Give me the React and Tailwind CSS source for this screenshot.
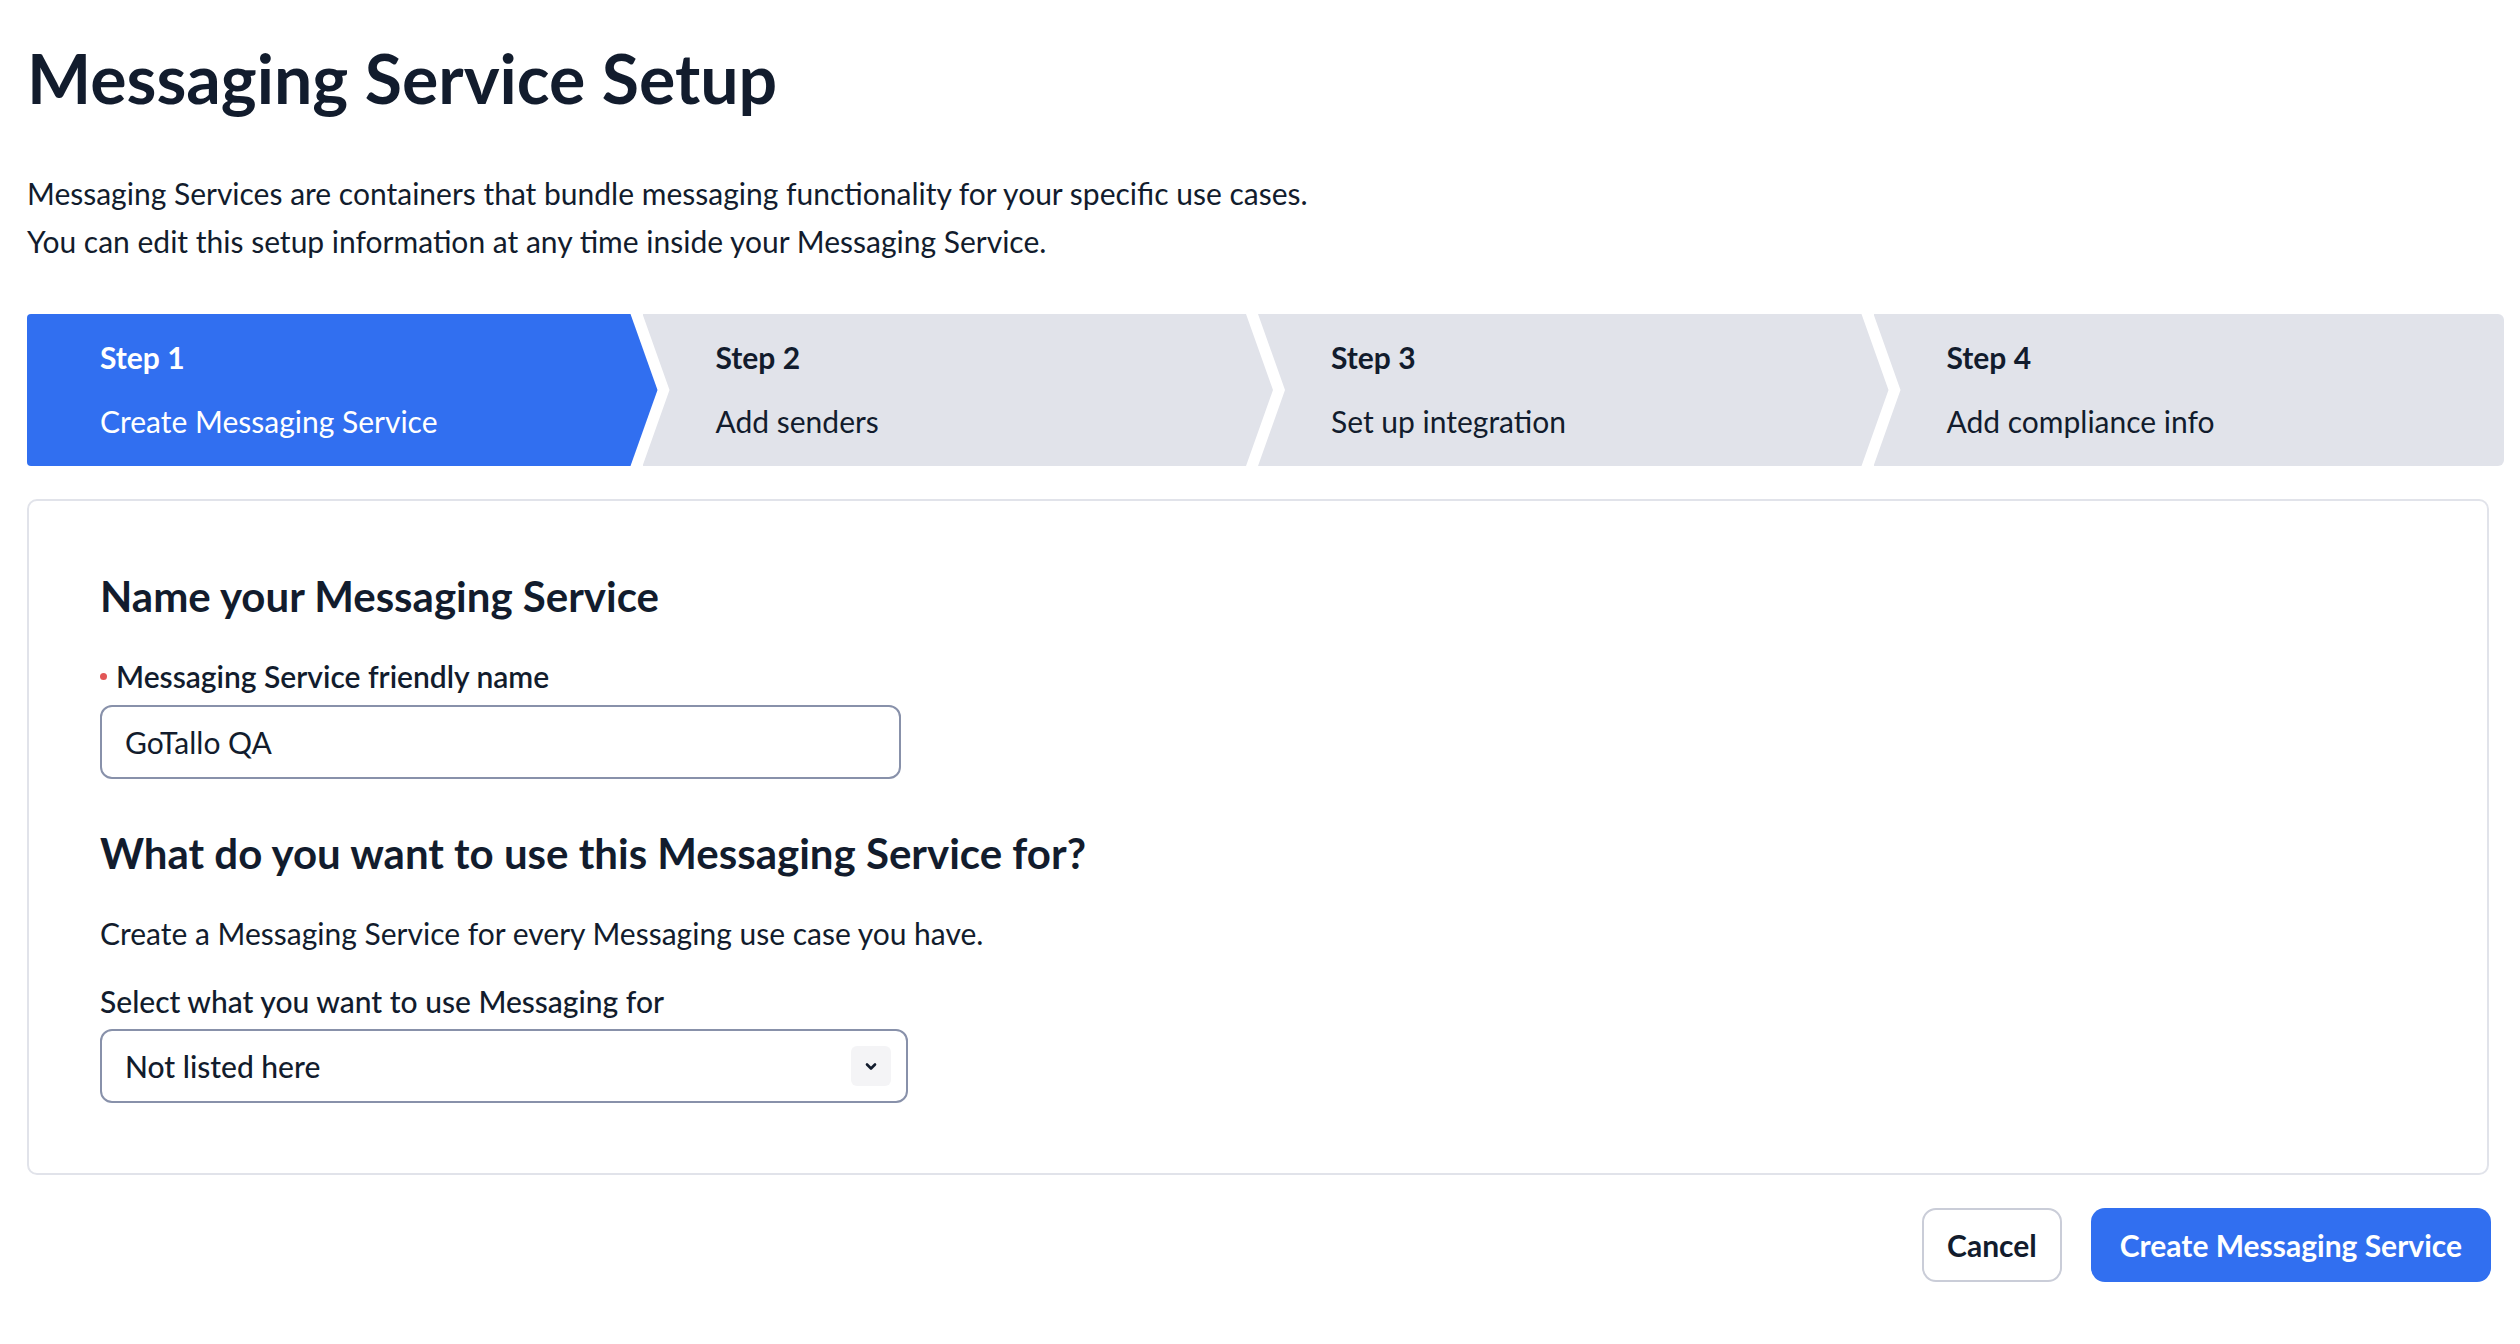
import React from 'react';

const steps = [
  { n: 1, label: 'Create Messaging Service' },
  { n: 2, label: 'Add senders' },
  { n: 3, label: 'Set up integration' },
  { n: 4, label: 'Add compliance info' },
];

// chevron shapes for the step bar
const stepShape = [
  'rounded-l-[4px] bg-[#316FF0] text-white [clip-path:polygon(0_0,calc(100%_-_27px)_0,100%_50%,calc(100%_-_27px)_100%,0_100%)]',
  '-ml-[15px] bg-[#E1E3EA] text-[#121C2D] [clip-path:polygon(0_0,calc(100%_-_27px)_0,100%_50%,calc(100%_-_27px)_100%,0_100%,27px_50%)]',
  '-ml-[15px] bg-[#E1E3EA] text-[#121C2D] [clip-path:polygon(0_0,calc(100%_-_27px)_0,100%_50%,calc(100%_-_27px)_100%,0_100%,27px_50%)]',
  '-ml-[15px] rounded-r-[6px] bg-[#E1E3EA] text-[#121C2D] [clip-path:polygon(0_0,100%_0,100%_100%,0_100%,27px_50%)]',
];

const ChevronDown = () => (
  <svg width="20" height="20" viewBox="0 0 20 20" fill="none">
    <path d="M6 8.5L10 12.5L14 8.5" stroke="#121C2D" strokeWidth="2.6" strokeLinecap="round" strokeLinejoin="round" />
  </svg>
);

const App = () => {
  return (
    <div className="min-h-screen bg-white font-[Lato,sans-serif] text-[#121C2D] pl-[27px] pr-[16px] pt-[42px]">
      {/* 页面标题 */}
      <h1 className="text-[68px] leading-[72px] font-bold">Messaging Service Setup</h1>
      <div className="mt-[55px] text-[30px] leading-[48px]">
        <p>Messaging Services are containers that bundle messaging functionality for your specific use cases.</p>
        <p>You can edit this setup information at any time inside your Messaging Service.</p>
      </div>

      {/* 步骤条 */}
      <div className="mt-[49px] flex h-[152px]">
        {steps.map((s, i) => (
          <div key={s.n} className={`flex-1 pl-[73px] pt-[23px] ${stepShape[i]}`}>
            <div className="text-[30px] leading-[40px] font-bold">Step {s.n}</div>
            <div className="mt-[24px] text-[30px] leading-[40px]">{s.label}</div>
          </div>
        ))}
      </div>

      {/* 表单卡片 */}
      <div className="mt-[33px] mr-[15px] rounded-[10px] border-2 border-[#E1E3EA] pl-[71px] pt-[71px] pb-[70px]">
        <h2 className="text-[42px] leading-[48px] font-bold">Name your Messaging Service</h2>
        <label className="mt-[36px] flex items-center text-[30px] leading-[40px] font-semibold">
          <span className="mr-[9px] h-[7px] w-[7px] rounded-full bg-[#E25656]"></span>
          Messaging Service friendly name
        </label>
        <div className="mt-[9px] flex h-[74px] w-[801px] items-center rounded-[12px] border-2 border-[#8891AA] pl-[23px] text-[30px]">
          GoTallo QA
        </div>

        <h2 className="mt-[50px] text-[42px] leading-[48px] font-bold">What do you want to use this Messaging Service for?</h2>
        <p className="mt-[36px] text-[30px] leading-[40px]">Create a Messaging Service for every Messaging use case you have.</p>
        <label className="mt-[28px] block text-[30px] leading-[40px] font-medium">Select what you want to use Messaging for</label>
        <div className="mt-[8px] flex h-[74px] w-[808px] items-center justify-between rounded-[12px] border-2 border-[#8891AA] pl-[23px] pr-[15px] text-[30px] font-medium">
          <span>Not listed here</span>
          <span className="flex h-[40px] w-[40px] items-center justify-center rounded-[6px] bg-[#F4F4F6]">
            <ChevronDown />
          </span>
        </div>
      </div>

      {/* 按钮 */}
      <div className="mt-[33px] mr-[13px] flex justify-end gap-[29px]">
        <button className="h-[74px] rounded-[14px] border-2 border-[#CACDD8] bg-white px-[23px] text-[30px] font-bold text-[#121C2D]">
          Cancel
        </button>
        <button className="h-[74px] rounded-[14px] bg-[#316FF0] px-[29px] text-[30px] font-bold text-white">
          Create Messaging Service
        </button>
      </div>
    </div>
  );
};

export default App;
